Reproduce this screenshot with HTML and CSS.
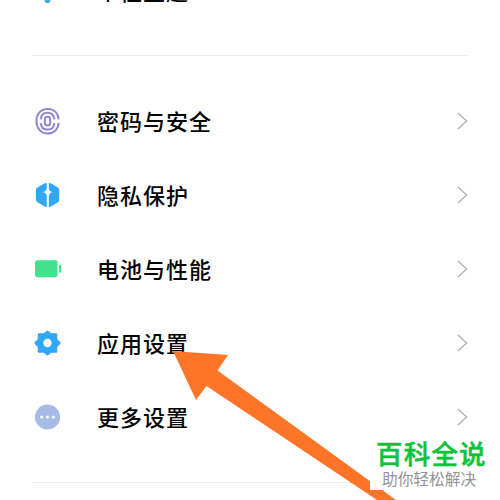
FILE: index.html
```html
<!DOCTYPE html>
<html lang="zh-CN">
<head>
<meta charset="utf-8">
<title>设置</title>
<link rel="stylesheet" href="styles.css">
</head>
<body>
<main class="screen">
  <section class="group group-top">
    <div class="row">
      <svg class="icon" viewBox="0 0 28 28"><path d="M6 3h16v13h-5v8.500a3 3 0 0 1-6 0V16H6z" fill="#47a9dc"/></svg>
      <span class="label">个性主题</span>
    </div>
  </section>
  <hr class="divider">
  <section class="group group-main">
    <div class="row">
      <svg class="icon" viewBox="0 0 28 28" fill="none" stroke="#8f89d0" stroke-width="2.100">
        <path d="M25.500 12.300C25 5.500 20.500 1.500 14 1.500C7 1.500 2.500 6.700 2.500 14S7 26.900 14 26.900C20.500 26.900 25 22.800 25.500 16"/>
        <path d="M7 12.300C7.200 8 9.700 5.500 14 5.500S20.800 8 21 12.300M7 16C7.200 20.300 9.700 22.900 14 22.900S20.800 20.300 21 16"/>
        <rect x="11.200" y="9.700" width="5.600" height="9" rx="2.800"/>
      </svg>
      <span class="label">密码与安全</span>
      <svg class="chevron" viewBox="0 0 12 20"><path d="M2 2l8.500 8L2 18"/></svg>
    </div>
    <div class="row">
      <svg class="icon" viewBox="0 0 28 28" fill="#31a7f6">
        <path d="M13.200 1.500V7.500Q12.700 10.500 9 11Q12.700 11.600 13.200 15V26.500Q12 26.500 10.500 25.600L3.500 21.600Q2 20.700 2 19V8.500Q2 7 3.500 6.100L10.500 2.200Q12 1.400 13.200 1.500z"/>
        <path d="M15.400 1.500V7.500Q15.900 10.500 19.600 11Q15.900 11.600 15.400 15V26.500Q16.600 26.500 18 25.600L24.700 21.600Q26.200 20.700 26.200 19V8.500Q26.200 7 24.700 6.100L18 2.200Q16.600 1.400 15.400 1.500z"/>
      </svg>
      <span class="label">隐私保护</span>
      <svg class="chevron" viewBox="0 0 12 20"><path d="M2 2l8.500 8L2 18"/></svg>
    </div>
    <div class="row">
      <svg class="icon" viewBox="0 0 28 28" fill="#40e28b">
        <rect x="1" y="5" width="23.500" height="17.500" rx="2.500"/>
        <rect x="25.900" y="9.500" width="2.100" height="8.500" rx="1"/>
      </svg>
      <span class="label">电池与性能</span>
      <svg class="chevron" viewBox="0 0 12 20"><path d="M2 2l8.500 8L2 18"/></svg>
    </div>
    <div class="row">
      <svg class="icon" viewBox="0 0 28 28">
        <path d="M14 2l3.600 2.900H23.100V10.400L26.600 14L23.100 17.600V23.100H17.600L14 26L10.400 23.100H4.900V17.600L1.400 14L4.900 10.400V4.900H10.400z" fill="#30a8f8" stroke="#30a8f8" stroke-width="2" stroke-linejoin="round"/>
        <circle cx="14" cy="14" r="4.300" fill="#fff"/>
      </svg>
      <span class="label">应用设置</span>
      <svg class="chevron" viewBox="0 0 12 20"><path d="M2 2l8.500 8L2 18"/></svg>
    </div>
    <div class="row">
      <svg class="icon" viewBox="0 0 28 28">
        <circle cx="14" cy="14" r="13" fill="#a6bce6"/>
        <g fill="#fff"><circle cx="8" cy="14" r="1.600"/><circle cx="14" cy="14" r="1.600"/><circle cx="20" cy="14" r="1.600"/></g>
      </svg>
      <span class="label">更多设置</span>
      <svg class="chevron" viewBox="0 0 12 20"><path d="M2 2l8.500 8L2 18"/></svg>
    </div>
  </section>
  <hr class="divider">
  <svg class="arrow" viewBox="0 0 500 500"><path d="M173 351L228 355L217.500 370.500L396 500H377L206.500 386L196 400z" fill="#ff7528"/></svg>
  <aside class="badge">
    <strong class="badge-title">百科全说</strong>
    <span class="badge-sub">助你轻松解决</span>
  </aside>
</main>
</body>
</html>
```
FILE: styles.css
```css
body {
  margin: 0;
  background: #fefefe;
  font-family: "Noto Sans CJK SC", sans-serif;
}

.screen {
  position: relative;
  box-sizing: border-box;
  width: 500px;
  height: 500px;
  overflow: hidden;
}

.group-top {
  display: flow-root;
  height: 55px;
}

.group-top .row {
  margin-top: -47px;
}

.group-main {
  padding: 28px 0;
}

.divider {
  height: 1px;
  margin: 0 32px;
  border: 0;
  background: #ececec;
}

.row {
  display: flex;
  align-items: center;
  height: 74px;
  padding: 0 32px 0 34px;
}

.icon {
  flex: none;
  width: 27px;
  height: 28px;
  margin-right: 36px;
}

.label {
  flex: 1;
  color: #050505;
  font-size: 22px;
  font-weight: 500;
  letter-spacing: 1px;
  line-height: 34px;
}

.group-main .label {
  padding-bottom: 2px;
}

.chevron {
  flex: none;
  width: 12px;
  height: 20px;
  fill: none;
  stroke: #b5b5b5;
  stroke-width: 1.5;
}

.arrow {
  position: absolute;
  inset: 0;
  width: 500px;
  height: 500px;
}

.badge {
  position: absolute;
  left: 370px;
  top: 437px;
  display: flex;
  flex-direction: column;
  align-items: flex-start;
  width: 130px;
  height: 53px;
  background: #fefefe;
  white-space: nowrap;
}

.badge-title {
  margin-left: 6px;
  color: #0cc43c;
  font-size: 26.5px;
  font-weight: 500;
  letter-spacing: 1.2px;
  line-height: 32px;
  -webkit-text-stroke: 0.5px #0cc43c;
}

.badge-sub {
  margin-left: 12px;
  color: #949494;
  font-size: 15.7px;
  line-height: 20px;
}
```
